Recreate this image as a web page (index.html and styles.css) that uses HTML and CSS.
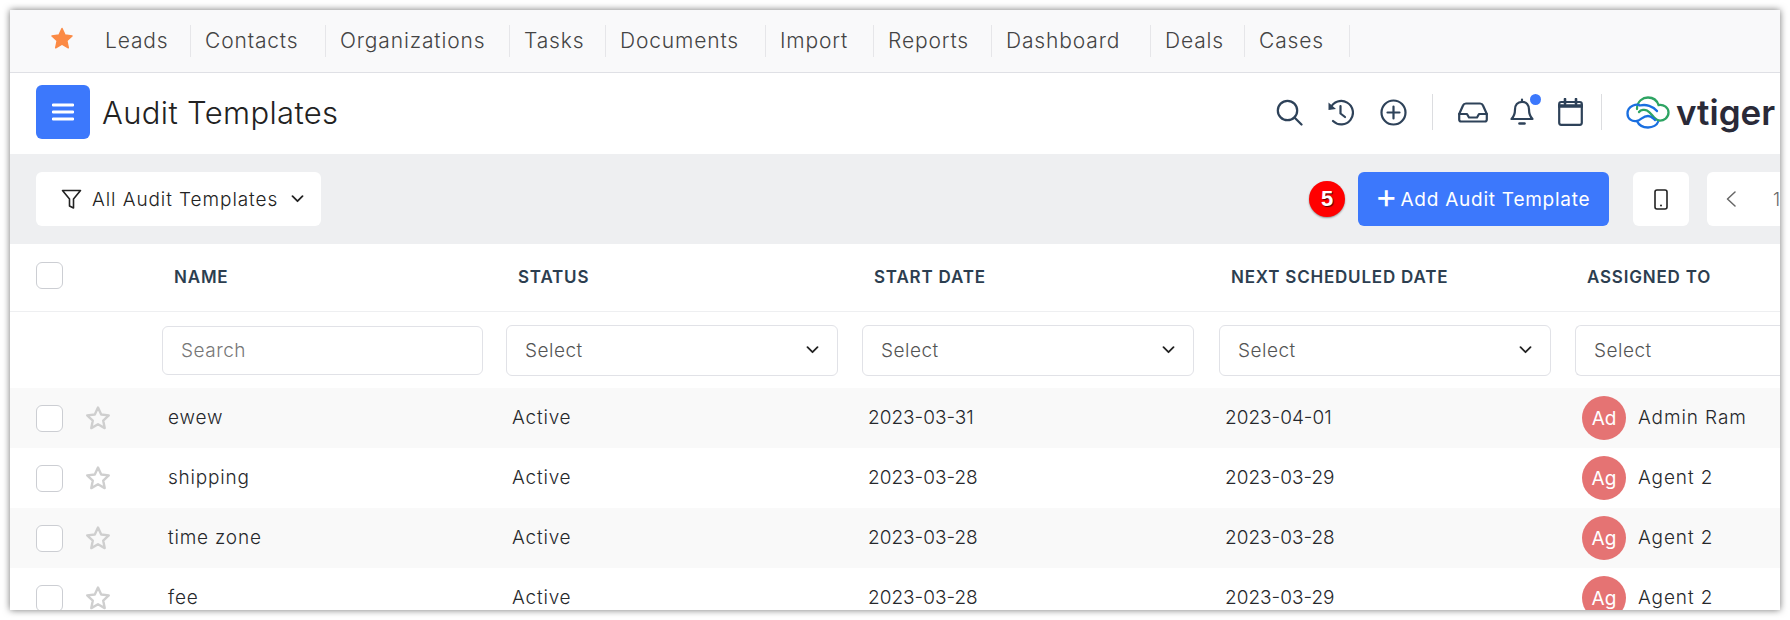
FILE: index.html
```html
<!DOCTYPE html>
<html lang="en">
<head>
<meta charset="utf-8">
<title>Audit Templates</title>
<link rel="stylesheet" href="styles.css">
</head>
<body>
<div class="window">
  <nav class="nav">
    <div class="nav-star"><svg width="24" height="23" viewBox="0 0 24 23"><path d="M12 1.500l3 6.600 7 .8-5.200 4.800 1.500 7.100L12 17.200l-6.300 3.600 1.500-7.100L2 8.900l7-.8z" fill="#fb8a45" stroke="#fb8a45" stroke-width="1.500" stroke-linejoin="round"/></svg></div>
    <a class="nav-item">Leads</a>
    <a class="nav-item">Contacts</a>
    <a class="nav-item">Organizations</a>
    <a class="nav-item">Tasks</a>
    <a class="nav-item">Documents</a>
    <a class="nav-item">Import</a>
    <a class="nav-item">Reports</a>
    <a class="nav-item">Dashboard</a>
    <a class="nav-item">Deals</a>
    <a class="nav-item">Cases</a>
  </nav>

  <header class="header">
    <div class="menu-btn"><svg width="22" height="20" viewBox="0 0 22 20"><path d="M1 3h20M1 10h20M1 17h20" stroke="#fff" stroke-width="2.800" stroke-linecap="round"/></svg></div>
    <h1 class="title">Audit Templates</h1>
    <div class="tools">
      <svg class="ico ico-search" width="27" height="27" viewBox="0 0 27 27"><circle cx="11.500" cy="11.500" r="9.700"/><path d="M18.500 18.500l7 7"/></svg>
      <svg class="ico ico-hist" width="27" height="27" viewBox="0 0 27 27"><path d="M3.500 9A11.700 11.700 0 1 1 6 22"/><path d="M1.500 3.500l7.500 6.500-7.500 1z" class="solid"/><path d="M13.500 7v7.500l4.500 3.500"/></svg>
      <svg class="ico ico-plus" width="27" height="27" viewBox="0 0 27 27"><circle cx="13.500" cy="13.500" r="12"/><path d="M13.500 7.500v12M7.500 13.500h12"/></svg>
      <span class="tool-sep"></span>
      <svg class="ico ico-inbox" width="30" height="21" viewBox="0 0 30 21"><path d="M1.200 12L5 3.500Q5.800 1.500 8 1.500h14q2.200 0 3 2l3.800 8.500v5.500q0 2-2 2H3.200q-2 0-2-2z"/><path d="M1.200 12h7.800l2 3.500h8l2-3.500h7.800"/></svg>
      <span class="bell">
        <svg class="ico" width="24" height="28" viewBox="0 0 24 28"><path d="M12 1.500v2.300M12 3.800c-4.500 0-7 3.200-7 7.700 0 5-1.500 7.500-3.500 9.500h21c-2-2-3.500-4.500-3.500-9.500 0-4.500-2.500-7.700-7-7.700z"/><path d="M9.500 25.500h5" stroke-width="2.600"/></svg>
        <span class="dot"></span>
      </span>
      <svg class="ico ico-cal" width="25" height="28" viewBox="0 0 25 28"><rect x="1.200" y="4" width="22.600" height="22.800" rx="2"/><path d="M1.200 8h22.600" stroke-width="3.500"/><path d="M7 1v5M18 1v5" stroke-width="2.600"/></svg>
      <span class="tool-sep tool-sep-last"></span>
      <svg class="cloud" width="44" height="33" viewBox="0 0 44 33" fill="none" stroke-width="2.300" stroke-linecap="round">
        <path d="M11 13C11 5 17 1.500 22 1.500 27 1.500 31 4.500 32.500 9 38 8 42.500 12 42.500 16.500 42.500 21.500 38 25 33 24.500 28 24 26 17 21 14.500 19 13.500 15 13.500 13 16" stroke="#2ea463"/>
        <path d="M31 15C27 10 20 8 14 9.500 11 7.500 1.500 9.500 1.500 17.500 1.500 23 6 26 11 25 13 29.500 17 31.500 22 31.500 27 31.500 31 29 32 26" stroke="#1a6fe0"/>
        <path d="M11 25C15 24 17 20 22 20 25.500 20 27 22.500 29 24" stroke="#1a6fe0"/>
      </svg>
      <span class="brand">vtiger</span>
    </div>
  </header>

  <div class="toolbar">
    <button class="btn btn-filter">
      <svg class="fun" width="21" height="21" viewBox="0 0 21 21"><path d="M1.500 1.500h18l-7 8.500v9l-4-2V10z" fill="none" stroke="#222" stroke-width="1.600" stroke-linejoin="round"/></svg>
      All Audit Templates
      <svg class="chev" width="13" height="8" viewBox="0 0 13 8"><path d="M1.500 1.200l5 5 5-5" fill="none" stroke="#222" stroke-width="1.800" stroke-linecap="round" stroke-linejoin="round"/></svg>
    </button>
    <span class="step">5</span>
    <button class="btn btn-add"><span class="add-plus">+</span>Add Audit Template</button>
    <button class="btn btn-mobile"><svg width="14" height="21" viewBox="0 0 14 21"><rect x="1" y="1" width="12" height="19" rx="2" fill="none" stroke="#222" stroke-width="1.600"/><circle cx="7" cy="16.500" r="1" fill="#222"/></svg></button>
    <div class="pager">
      <svg width="12" height="16" viewBox="0 0 12 16"><path d="M10 1L2.500 8l7.500 7" fill="none" stroke="#666" stroke-width="1.500" stroke-linecap="round" stroke-linejoin="round"/></svg>
      <span class="page-no">1</span>
    </div>
  </div>

  <div class="grid head">
    <div class="lead"><span class="cb"></span></div>
    <div class="th">NAME</div>
    <div class="th">STATUS</div>
    <div class="th">START DATE</div>
    <div class="th">NEXT SCHEDULED DATE</div>
    <div class="th">ASSIGNED TO</div>
  </div>

  <div class="grid filters">
    <div></div>
    <div class="fcell fcell-name"><div class="field field-search">Search</div></div>
    <div class="fcell"><div class="field">Select<svg class="field-chev" width="13" height="8" viewBox="0 0 13 8"><path d="M1.500 1.200l5 5 5-5" fill="none" stroke="#222" stroke-width="1.800" stroke-linecap="round" stroke-linejoin="round"/></svg></div></div>
    <div class="fcell"><div class="field">Select<svg class="field-chev" width="13" height="8" viewBox="0 0 13 8"><path d="M1.500 1.200l5 5 5-5" fill="none" stroke="#222" stroke-width="1.800" stroke-linecap="round" stroke-linejoin="round"/></svg></div></div>
    <div class="fcell"><div class="field">Select<svg class="field-chev" width="13" height="8" viewBox="0 0 13 8"><path d="M1.500 1.200l5 5 5-5" fill="none" stroke="#222" stroke-width="1.800" stroke-linecap="round" stroke-linejoin="round"/></svg></div></div>
    <div class="fcell"><div class="field field-open">Select</div></div>
  </div>

  <div class="grid row">
    <div class="lead"><span class="cb"></span><svg class="rstar" width="26" height="26" viewBox="0 0 26 26"><path d="M13 2.500l3.200 7 7.600.9-5.600 5.200 1.500 7.500L13 19.300l-6.700 3.800 1.500-7.500-5.600-5.200 7.600-.9z"/></svg></div>
    <div class="td">ewew</div>
    <div class="td">Active</div>
    <div class="td td-date">2023-03-31</div>
    <div class="td td-date">2023-04-01</div>
    <div class="td user"><span class="avatar">Ad</span>Admin Ram</div>
  </div>
  <div class="grid row">
    <div class="lead"><span class="cb"></span><svg class="rstar" width="26" height="26" viewBox="0 0 26 26"><path d="M13 2.500l3.200 7 7.600.9-5.600 5.200 1.500 7.500L13 19.300l-6.700 3.800 1.500-7.500-5.600-5.200 7.600-.9z"/></svg></div>
    <div class="td">shipping</div>
    <div class="td">Active</div>
    <div class="td td-date">2023-03-28</div>
    <div class="td td-date">2023-03-29</div>
    <div class="td user"><span class="avatar">Ag</span>Agent 2</div>
  </div>
  <div class="grid row">
    <div class="lead"><span class="cb"></span><svg class="rstar" width="26" height="26" viewBox="0 0 26 26"><path d="M13 2.500l3.200 7 7.600.9-5.600 5.200 1.500 7.500L13 19.300l-6.700 3.800 1.500-7.500-5.600-5.200 7.600-.9z"/></svg></div>
    <div class="td">time zone</div>
    <div class="td">Active</div>
    <div class="td td-date">2023-03-28</div>
    <div class="td td-date">2023-03-28</div>
    <div class="td user"><span class="avatar">Ag</span>Agent 2</div>
  </div>
  <div class="grid row">
    <div class="lead"><span class="cb"></span><svg class="rstar" width="26" height="26" viewBox="0 0 26 26"><path d="M13 2.500l3.200 7 7.600.9-5.600 5.200 1.500 7.500L13 19.300l-6.700 3.800 1.500-7.500-5.600-5.200 7.600-.9z"/></svg></div>
    <div class="td">fee</div>
    <div class="td">Active</div>
    <div class="td td-date">2023-03-28</div>
    <div class="td td-date">2023-03-29</div>
    <div class="td user"><span class="avatar">Ag</span>Agent 2</div>
  </div>
</div>
</body>
</html>
```

FILE: styles.css
```css
* { box-sizing: border-box; }
html, body { margin: 0; height: 100%; background: #fff; overflow: hidden; }
body { padding: 10px; font-family: Inter, "Open Sans", sans-serif; color: #26282c; }

.window {
  width: 1770px;
  height: 600px;
  background: #fff;
  overflow: hidden;
  box-shadow: 0 0 7px rgba(0, 0, 0, .55);
}

/* top navigation */
.nav {
  height: 63px;
  display: grid;
  grid-template-columns: 81px 100px 135px 184px 96px 160px 108px 118px 159px 94px 105px;
  align-items: center;
  background: #f9f9fa;
  border-bottom: 1px solid #dfe0e5;
}
.nav-star { padding-left: 40px; display: flex; margin-top: -6px; }
.nav-item {
  height: 32px;
  line-height: 32px;
  padding-left: 14px;
  font-size: 21px;
  font-weight: 300;
  letter-spacing: .85px;
  color: #444;
  white-space: nowrap;
  border-right: 1px solid #e6e6e9;
}

/* page header */
.header {
  height: 81px;
  display: flex;
  align-items: center;
  padding: 0 0 3px 26px;
}
.menu-btn {
  width: 54px;
  height: 54px;
  border-radius: 6px;
  background: #3c78fc;
  display: flex;
  align-items: center;
  justify-content: center;
}
.title {
  margin: 0 0 0 12px;
  font-size: 31px;
  font-weight: 300;
  letter-spacing: .35px;
  color: #222;
}
.tools { margin-left: auto; display: flex; align-items: center; height: 36px; }
.ico { fill: none; stroke: #2e4259; stroke-width: 2.200; stroke-linecap: round; stroke-linejoin: round; display: block; }
.ico .solid { fill: #2e4259; stroke: none; }
.ico-search { margin-right: 24px; }
.ico-hist { margin-right: 26px; }
.ico-plus { margin-right: 25px; }
.tool-sep { width: 1px; height: 36px; background: #dcdde0; margin-right: 25px; }
.ico-inbox { margin-right: 22px; }
.bell { position: relative; margin-right: 24px; }
.dot {
  position: absolute;
  top: -4px;
  right: -7px;
  width: 11px;
  height: 11px;
  border-radius: 50%;
  background: #3c78fc;
}
.ico-cal { margin-right: 18px; }
.tool-sep-last { margin-right: 24px; }
.cloud { display: block; margin-right: 6px; }
.brand {
  width: 104px;
  font-size: 35px;
  font-weight: 600;
  letter-spacing: 0;
  color: #2a2a38;
  line-height: 36px;
}

/* toolbar */
.toolbar {
  height: 90px;
  display: flex;
  align-items: center;
  padding-left: 26px;
  background: #eeeff1;
}
.btn {
  height: 54px;
  border: 0;
  border-radius: 6px;
  background: #fff;
  font-family: inherit;
  display: flex;
  align-items: center;
  flex: none;
}
.btn-filter {
  width: 285px;
  padding-left: 25px;
  font-size: 19px;
  font-weight: 300;
  letter-spacing: .92px;
  color: #222;
}
.fun { margin-right: 10px; }
.chev { margin-left: 13px; }
.step {
  margin-left: 988px;
  flex: none;
  width: 36px;
  height: 36px;
  border-radius: 50%;
  background: #f00;
  color: #fff;
  font-family: "Liberation Sans", sans-serif;
  font-size: 22px;
  font-weight: 700;
  text-shadow: 1px 1px 1px rgba(0, 0, 0, .7);
  box-shadow: 0 1px 2px rgba(0, 0, 0, .4);
  display: flex;
  align-items: center;
  justify-content: center;
}
.btn-add {
  margin-left: 13px;
  width: 251px;
  padding-left: 17px;
  background: #3c78fc;
  color: #fff;
  font-size: 19px;
  font-weight: 400;
  letter-spacing: .75px;
}
.add-plus { font-size: 34px; font-weight: 400; line-height: 1; margin-right: 3px; letter-spacing: 0; margin-top: -6px; }
.btn-mobile { margin-left: 24px; width: 56px; justify-content: center; }
.pager {
  margin-left: 18px;
  width: 100px;
  height: 54px;
  flex: none;
  border-radius: 6px 0 0 6px;
  background: #fff;
  display: flex;
  align-items: center;
  padding-left: 18px;
  color: #666;
  font-size: 18px;
  font-weight: 300;
}
.page-no { margin-left: 36px; }

/* table */
.grid { display: grid; grid-template-columns: 140px 344px 356px 357px 356px 217px; }
.head { height: 68px; align-items: center; border-bottom: 1px solid #eeeff1; }
.th {
  padding-left: 24px;
  font-size: 17px;
  font-weight: 600;
  color: #2c3e50;
  letter-spacing: .8px;
  margin-top: -1px;
  white-space: nowrap;
}
.head .lead { margin-top: -5px; }
.lead { display: flex; align-items: center; padding-left: 26px; }
.cb {
  width: 27px;
  height: 27px;
  border: 1px solid #ccced3;
  border-radius: 6px;
  background: #fff;
  flex: none;
}
.rstar { margin-left: 22px; fill: none; stroke: #cfcfcf; stroke-width: 2.400; stroke-linejoin: round; flex: none; }

.filters { height: 76px; align-items: center; }
.fcell { padding-left: 12px; }
.fcell-name { padding-right: 11px; }
.field {
  height: 51px;
  width: 332px;
  border: 1px solid #e1e2e7;
  border-radius: 6px;
  padding: 0 18px;
  display: flex;
  align-items: center;
  justify-content: space-between;
  font-size: 19px;
  font-weight: 300;
  letter-spacing: .5px;
  color: #555;
}
.field-search { width: 321px; height: 49px; color: #777; }
.field-open { border-right: 0; border-radius: 6px 0 0 6px; width: 205px; }
.field-chev { margin-right: 0; }

.row { height: 60px; align-items: center; }
.row:nth-of-type(even) { background: #f9f9f9; }
.td {
  padding-left: 18px;
  font-size: 19px;
  font-weight: 350;
  letter-spacing: .8px;
  color: #26282c;
  margin-top: -2px;
}
.td-date { letter-spacing: 0; }
.user { display: flex; align-items: center; padding-left: 19px; white-space: nowrap; letter-spacing: .9px; }
.avatar {
  width: 44px;
  height: 44px;
  border-radius: 50%;
  background: #e57373;
  color: #fff;
  display: flex;
  align-items: center;
  justify-content: center;
  margin: 2px 12px 0 0;
  font-weight: 400;
  letter-spacing: 0;
  flex: none;
}
```
